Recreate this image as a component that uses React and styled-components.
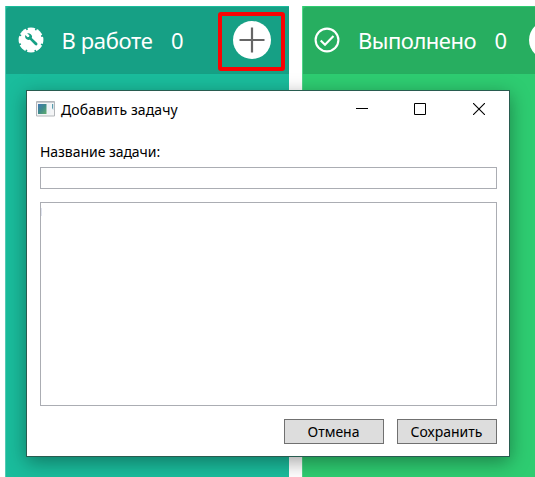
import React from "react";
import styled, { createGlobalStyle } from "styled-components";

const GlobalStyle = createGlobalStyle`
  * { box-sizing: border-box; }
  body {
    margin: 0;
    overflow: hidden;
    background: #fff;
    font-family: "Noto Sans", "Open Sans", sans-serif;
  }
`;

const Board = styled.main`
  position: relative;
  display: flex;
  gap: 12.5px;
  width: 535px;
  height: 477px;
  padding: 6px 0 0 5px;
  overflow: hidden;
`;

const Column = styled.section`
  flex: 0 0 284px;
  background: ${(p) => p.$color};
  border-left: 1px solid ${(p) => p.$edge};
`;

const ColumnHeader = styled.header`
  display: flex;
  align-items: center;
  height: 68px;
  padding: 0 18.5px 2px 11.5px;
  border-top: 1px solid ${(p) => p.$edge};
  border-top-left-radius: 4px;
  background: ${(p) => p.$color};
  color: #fff;
`;

const StatusIcon = styled.svg`
  flex: none;
  width: 26px;
  height: 26px;
`;

const ColumnTitle = styled.h2`
  margin: 0 0 0 18px;
  font-size: 22px;
  font-weight: 400;
  line-height: 30px;
  letter-spacing: ${(p) => p.$spacing};
  white-space: nowrap;
`;

const Count = styled.span`
  margin-left: 18.5px;
  font-size: 22px;
  line-height: 30px;
`;

const AddButton = styled.button`
  flex: none;
  width: 38px;
  height: 38px;
  margin-left: auto;
  padding: 0;
  border: 0;
  border-radius: 50%;
  background: #fff;

  svg { display: block; }
`;

const Highlight = styled.div`
  position: absolute;
  left: 217.5px;
  top: 11.5px;
  width: 67px;
  height: 59px;
  border: 4px solid #fa0303;
  border-radius: 3px;
`;

const Dialog = styled.div`
  position: absolute;
  left: 26px;
  top: 90px;
  width: 484px;
  height: 367px;
  border: 1px solid #285c50;
  background: #fff;
  box-shadow: 0 5px 18px rgba(0, 0, 0, 0.36);
  color: #000;
`;

const TitleBar = styled.div`
  display: flex;
  align-items: center;
  height: 36px;
  padding: 0 1px 0 9px;
`;

const DialogTitle = styled.h1`
  flex: 1;
  margin: 2px 0 0 5px;
  font-size: 14px;
  font-weight: 400;
  line-height: 20px;
  letter-spacing: 0.1px;
`;

const WindowButton = styled.button`
  display: grid;
  place-items: center;
  width: 58.5px;
  height: 36px;
  padding: 0;
  border: 0;
  background: none;
`;

const Form = styled.form`
  display: flex;
  flex-direction: column;
  padding: 15px 12px 0 13px;
`;

const Label = styled.label`
  height: 25px;
  font-size: 14px;
  line-height: 20px;
  letter-spacing: -0.05px;
`;

const TextInput = styled.input`
  width: 457px;
  height: 22px;
  padding: 0 3px;
  border: 1px solid #abadb3;
  border-radius: 0;
  outline: 0;
`;

const TextArea = styled.textarea`
  width: 457px;
  height: 204px;
  margin-top: 13px;
  border: 1px solid #abadb3;
  border-radius: 0;
  outline: 0;
  resize: none;
  background: linear-gradient(#dfe3ee, #dfe3ee) 0 5px / 1px 8px no-repeat #fff;
`;

const Actions = styled.div`
  display: flex;
  justify-content: flex-end;
  gap: 13px;
  margin-top: 13px;
`;

const ActionButton = styled.button`
  width: 100px;
  height: 25px;
  padding: 0 1px 0 0;
  border: 1px solid #707070;
  background: #ddd;
  color: #000;
  font: 14px/23px "Noto Sans", sans-serif;
`;

const GearIcon = () => (
  <StatusIcon viewBox="0 0 26 26">
    <circle cx="13" cy="13" r="12.4" fill="#fff" />
    <circle
      cx="13"
      cy="13"
      r="12"
      fill="none"
      stroke="#16a085"
      strokeWidth="2.4"
      strokeDasharray="1.7 7.725"
      strokeDashoffset="-3.9"
    />
    <path
      d="M7.3 8l2.300 2.200 1.500-.4.300-1.500-2.200-1.900c2.300-.5 4.600.8 4.900 3.200l-.3 1.300 5.300 5.200c1.300 1.400-.6 3.200-2 1.900l-5.200-5.200c-3 .8-5.500-1.700-4.600-4.800z"
      fill="#16a085"
    />
  </StatusIcon>
);

const CheckIcon = () => (
  <StatusIcon viewBox="0 0 26 26" fill="none" stroke="#fff" strokeWidth="2.1">
    <circle cx="13" cy="13" r="11.4" />
    <path d="M6.7 13.6l4.3 4.2 8.500-8.700" />
  </StatusIcon>
);

const Plus = () => (
  <AddButton aria-label="Добавить">
    <svg width="38" height="38" stroke="#666" strokeWidth="2.2">
      <path d="M19 6.5v25M6.5 19h25" />
    </svg>
  </AddButton>
);

const AppIcon = () => (
  <svg width="20" height="16" viewBox="0 0 20 16">
    <defs>
      <linearGradient id="pane" x1="0" y1="0" x2="1" y2="1">
        <stop offset="0" stopColor="#4178b5" />
        <stop offset=".5" stopColor="#3f8b8b" />
        <stop offset="1" stopColor="#62ae6d" />
      </linearGradient>
    </defs>
    <path d="M.5.5h18v14.5H.5z" fill="#f4f5f6" stroke="#b3b6ba" />
    <path d="M1 1.5h17" stroke="#c7cbd0" />
    <path d="M2 3h8.500v10H2z" fill="url(#pane)" />
    <path d="M11.5 3h3v10h-3z" fill="#edf1f6" />
    <path d="M16 3h1.200v6L16 7z" fill="#5a9cae" />
  </svg>
);

export default function App() {
  return (
    <>
      <GlobalStyle />
      <Board>
        <Column $color="#1abc9c" $edge="#54cab3">
          <ColumnHeader $color="#16a085" $edge="#1abc9c">
            <GearIcon />
            <ColumnTitle $spacing="-0.35px">В работе</ColumnTitle>
            <Count>0</Count>
            <Plus />
          </ColumnHeader>
        </Column>
        <Column $color="#2ecc71" $edge="#50d488">
          <ColumnHeader $color="#27ae60" $edge="#2ecc71">
            <CheckIcon />
            <ColumnTitle $spacing="-0.5px">Выполнено</ColumnTitle>
            <Count>0</Count>
            <Plus />
          </ColumnHeader>
        </Column>
        <Highlight />
        <Dialog role="dialog">
          <TitleBar>
            <AppIcon />
            <DialogTitle>Добавить задачу</DialogTitle>
            <WindowButton aria-label="Свернуть">
              <svg width="12" height="12" stroke="#000"><path d="M0 5.5h12" /></svg>
            </WindowButton>
            <WindowButton aria-label="Развернуть">
              <svg width="12" height="12" fill="none" stroke="#000"><path d="M.5.5h11v11H.5z" /></svg>
            </WindowButton>
            <WindowButton aria-label="Закрыть">
              <svg width="12" height="12" stroke="#000" strokeWidth="1.1"><path d="M0 0l12 12M12 0L0 12" /></svg>
            </WindowButton>
          </TitleBar>
          <Form>
            <Label htmlFor="name">Название задачи:</Label>
            <TextInput id="name" />
            <TextArea />
            <Actions>
              <ActionButton type="button">Отмена</ActionButton>
              <ActionButton type="button">Сохранить</ActionButton>
            </Actions>
          </Form>
        </Dialog>
      </Board>
    </>
  );
}
